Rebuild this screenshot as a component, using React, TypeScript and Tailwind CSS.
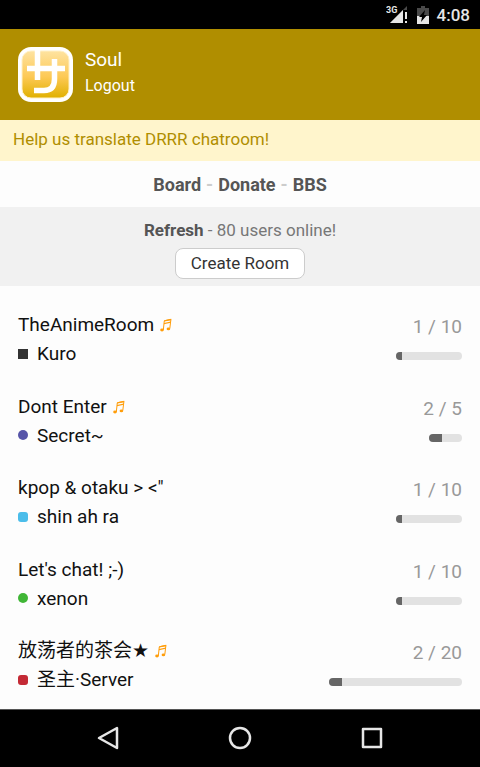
interface Room {
  name: string
  host: string
  music?: boolean
  users: number
  limit: number
  marker: string
}

const SLOT_WIDTH = 6.65

const rooms: Room[] = [
  { name: 'TheAnimeRoom', host: 'Kuro', music: true, users: 1, limit: 10, marker: 'bg-[#333333]' },
  { name: 'Dont Enter', host: 'Secret~', music: true, users: 2, limit: 5, marker: 'rounded-full bg-[#5654a8]' },
  { name: 'kpop & otaku > <"', host: 'shin ah ra', users: 1, limit: 10, marker: 'rounded-[3px] bg-[#4bbdea]' },
  { name: "Let's chat! ;-)", host: 'xenon', users: 1, limit: 10, marker: 'rounded-full bg-[#40b636]' },
  { name: '放荡者的茶会★', host: '圣主·Server', music: true, users: 2, limit: 20, marker: 'rounded-[3px] bg-[#c42a35]' },
]

function StatusBar() {
  return (
    <div className="flex h-[29px] items-center justify-end bg-black pr-[10px] text-[#e6e6e6]">
      <svg width="22" height="20" viewBox="0 0 22 20" aria-hidden="true">
        <path d="M4 18 L21 1 V5 H17 V18 Z" fill="#4a4a4a" />
        <text x="0" y="8" fontSize="9" fontWeight="700" fill="currentColor">
          3G
        </text>
        <path d="M4 18 L17 5 V18 Z" fill="currentColor" />
        <path d="M19 7 h2 v7 h-2 z M19 16 h2 v2 h-2 z" fill="currentColor" />
      </svg>
      <svg className="ml-[9px]" width="12" height="18" viewBox="0 0 12 18" aria-hidden="true">
        <path d="M4 0 h4 v2 h4 v16 h-12 v-16 h4 z" fill="#4a4a4a" />
        <path d="M0 10 h12 v8 h-12 z" fill="currentColor" />
        <path d="M8 4 L2 11 H5 L4 16 L10 9 H7 Z" fill="#000000" />
      </svg>
      <span className="ml-2 text-[17px] leading-5 font-medium">4:08</span>
    </div>
  )
}

function Logo() {
  return (
    <svg width="55" height="55" viewBox="0 0 55 55" role="img" aria-label="Avatar">
      <defs>
        <linearGradient id="logo-fill" x1="0" y1="0" x2="0" y2="1">
          <stop offset="0" stopColor="#fee3a0" />
          <stop offset="0.55" stopColor="#fdc955" />
          <stop offset="1" stopColor="#e0b000" />
        </linearGradient>
      </defs>
      <rect width="55" height="55" rx="13" fill="#ffffff" />
      <rect x="4" y="4" width="47" height="47" rx="9" fill="url(#logo-fill)" stroke="#fff0c4" />
      <path
        d="M9 21.500 H47 M19.500 3 V33 M36.500 12 V32 Q36.500 43.500 26 43.500 H16"
        fill="none"
        stroke="#ffffff"
        strokeWidth="5.5"
      />
    </svg>
  )
}

function MusicIcon() {
  return (
    <svg className="ml-[6px] mt-2" width="12" height="14" viewBox="0 0 12 14" role="img" aria-label="Music room">
      <path d="M3.300 12 L4.300 2.800 L10.900 1.400 L9.800 10.500" fill="none" stroke="#ff9d0a" strokeWidth="1" />
      <path d="M4.300 2.200 L11.200 0.800 V2.200 L4.200 3.600 Z M4 5 L10.800 3.600 V4.800 L3.900 6.200 Z" fill="#ff9d0a" />
      <ellipse cx="2" cy="12" rx="1.800" ry="1.400" fill="#ff9d0a" />
      <ellipse cx="8.400" cy="10.900" rx="1.800" ry="1.400" fill="#ff9d0a" />
    </svg>
  )
}

function RoomRow({ room }: { room: Room }) {
  return (
    <li className="flex justify-between">
      <div className="text-[19px] leading-[29px] text-[#111111]">
        <div className="flex h-[29px]">
          {room.name}
          {room.music && <MusicIcon />}
        </div>
        <div className="flex h-[29px] items-center">
          <span className={`mr-[9px] h-[10px] w-[10px] ${room.marker}`} />
          {room.host}
        </div>
      </div>
      <div className="flex flex-col items-end gap-3 pt-1">
        <span className="text-[19px] leading-[26px] text-[#999999]">
          {room.users} / {room.limit}
        </span>
        <div
          className="h-2 overflow-hidden rounded-full bg-[#e2e2e2]"
          style={{ width: room.limit * SLOT_WIDTH }}
        >
          <div className="h-full bg-[#666666]" style={{ width: room.users * SLOT_WIDTH }} />
        </div>
      </div>
    </li>
  )
}

export default function App() {
  return (
    <div className="flex min-h-screen flex-col bg-[#fdfdfd] font-[Roboto,'DejaVu_Sans','Noto_Sans_CJK_SC',sans-serif]">
      <StatusBar />
      <header className="flex h-[91px] items-center bg-[#b08e00] px-[18px] text-white">
        <Logo />
        <div className="ml-3 flex flex-col items-start pb-1">
          <span className="text-[19px] leading-[27px]">Soul</span>
          <a href="#logout" className="text-[16px] leading-[26px]">
            Logout
          </a>
        </div>
      </header>
      <a
        href="#translate"
        className="flex h-[41px] items-center bg-[#fff5cc] px-[13px] pb-[2px] text-[17px] text-[#b08e00]"
      >
        Help us translate DRRR chatroom!
      </a>
      <nav className="flex h-[46px] items-center justify-center gap-[5px] text-[18px] font-bold text-[#cccccc]">
        <a href="#board" className="text-[#555555]">
          Board
        </a>
        -
        <a href="#donate" className="text-[#555555]">
          Donate
        </a>
        -
        <a href="#bbs" className="text-[#555555]">
          BBS
        </a>
      </nav>
      <section className="flex flex-col items-center bg-[#f1f1f1] pt-3 pb-[7px]">
        <p className="text-[17px] leading-[23px] text-[#777777]">
          <a href="#refresh" className="font-bold text-[#555555]">
            Refresh
          </a>{' '}
          - 80 users online!
        </p>
        <button
          type="button"
          className="mt-[6px] h-[31px] rounded-lg border border-[#cccccc] bg-white px-[15px] text-[17px] leading-[29px] text-[#333333]"
        >
          Create Room
        </button>
      </section>
      <ul className="flex flex-1 flex-col justify-between gap-5 px-[18px] pt-6 pb-[15px]">
        {rooms.map((room) => (
          <RoomRow key={room.name} room={room} />
        ))}
      </ul>
      <footer className="flex h-[58px] items-center justify-center gap-[102px] border-t border-[#555555] bg-black text-[#e6e6e6]">
        <button type="button" aria-label="Back">
          <svg width="30" height="30" viewBox="0 0 30 30" fill="none" stroke="currentColor" strokeWidth="2.5" strokeLinejoin="round">
            <path d="M24 4 V24 L6 14 Z" />
          </svg>
        </button>
        <button type="button" aria-label="Home">
          <svg width="30" height="30" viewBox="0 0 30 30" fill="none" stroke="currentColor" strokeWidth="2.5">
            <circle cx="15" cy="14" r="10" />
          </svg>
        </button>
        <button type="button" aria-label="Recent apps">
          <svg width="30" height="30" viewBox="0 0 30 30" fill="none" stroke="currentColor" strokeWidth="2.5" strokeLinejoin="round">
            <rect x="6" y="5" width="18" height="18" />
          </svg>
        </button>
      </footer>
    </div>
  )
}
